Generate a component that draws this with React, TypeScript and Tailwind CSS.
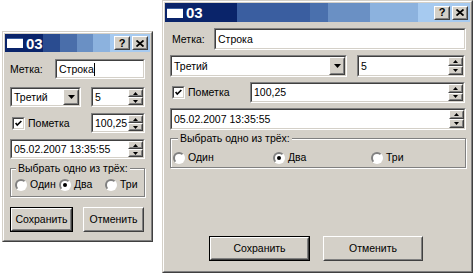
import type { ReactNode } from 'react';

/** Classic Win9x 3D borders. */
function Sunken({ className = '', children }: { className?: string; children?: ReactNode }) {
  return (
    <div className={`border border-t-[#808080] border-l-[#808080] border-r-white border-b-white ${className}`}>
      <div className="flex h-full items-center border border-t-[#404040] border-l-[#404040] border-r-[#d4d0c8] border-b-[#d4d0c8] bg-white">
        {children}
      </div>
    </div>
  );
}

function Raised({ className = '', children }: { className?: string; children?: ReactNode }) {
  return (
    <div className={`border border-t-white border-l-white border-r-[#404040] border-b-[#404040] bg-[#d4d0c8] ${className}`}>
      <div className="flex h-full items-center justify-center border border-t-[#d4d0c8] border-l-[#d4d0c8] border-r-[#808080] border-b-[#808080]">
        {children}
      </div>
    </div>
  );
}

function Arrow({ up = false, size = 'sm' }: { up?: boolean; size?: 'sm' | 'md' }) {
  const w = size === 'md' ? 7 : 5;
  const h = size === 'md' ? 4 : 3;
  const d = up ? `M${w / 2} 0L${w} ${h}L0 ${h}Z` : `M0 0L${w} 0L${w / 2} ${h}Z`;
  return (
    <svg width={w} height={h} viewBox={`0 0 ${w} ${h}`}>
      <path d={d} fill="#000" />
    </svg>
  );
}

function SpinButtons() {
  return (
    <div className="ml-auto flex h-full w-[15px] flex-col">
      <Raised className="flex-1">
        <Arrow up />
      </Raised>
      <Raised className="flex-1">
        <Arrow />
      </Raised>
    </div>
  );
}

function TextField({ value, className = '', cursor = false }: { value: string; className?: string; cursor?: boolean }) {
  return (
    <Sunken className={className}>
      <span className="pl-[2px]">{value}</span>
      {cursor && <span className="h-[13px] w-px bg-black" />}
    </Sunken>
  );
}

function Spinner({ value, className = '' }: { value: string; className?: string }) {
  return (
    <Sunken className={className}>
      <span className="pl-[2px]">{value}</span>
      <SpinButtons />
    </Sunken>
  );
}

function Combo({ value, className = '' }: { value: string; className?: string }) {
  return (
    <Sunken className={className}>
      <span className="pl-[2px]">{value}</span>
      <Raised className="ml-auto h-full w-[16px]">
        <Arrow size="md" />
      </Raised>
    </Sunken>
  );
}

function Checkbox({ label, className = '' }: { label: string; className?: string }) {
  return (
    <div className={`flex items-center gap-[3px] ${className}`}>
      <Sunken className="h-[13px] w-[13px]">
        <svg width="11" height="11" viewBox="0 0 11 11">
          <path d="M2 5L4 7.5L9 2.5" stroke="#000" strokeWidth="2" fill="none" />
        </svg>
      </Sunken>
      <span>{label}</span>
    </div>
  );
}

function Radio({ label, checked = false, className = '' }: { label: string; checked?: boolean; className?: string }) {
  return (
    <div className={`flex items-center gap-[3px] ${className}`}>
      <span className="flex h-[12px] w-[12px] items-center justify-center rounded-full border-2 border-t-[#808080] border-l-[#808080] border-r-white border-b-white bg-white">
        {checked && <span className="h-[4px] w-[4px] rounded-full bg-black" />}
      </span>
      <span>{label}</span>
    </div>
  );
}

function GroupBox({ label, className = '', labelClass = '', children }: { label: string; className?: string; labelClass?: string; children: ReactNode }) {
  return (
    <div className={`relative border border-[#808080] shadow-[inset_1px_1px_0_white,1px_1px_0_white] ${className}`}>
      <span className={`absolute -top-[8px] bg-[#d4d0c8] px-[2px] leading-[14px] ${labelClass}`}>{label}</span>
      {children}
    </div>
  );
}

function PushButton({ label, className = '', isDefault = false }: { label: string; className?: string; isDefault?: boolean }) {
  const btn = (
    <Raised className={isDefault ? 'h-full w-full' : className}>
      <span>{label}</span>
    </Raised>
  );
  return isDefault ? <div className={`border border-black ${className}`}>{btn}</div> : btn;
}

function TitleButton({ children }: { children: ReactNode }) {
  return <Raised className="h-[14px] w-[16px]">{children}</Raised>;
}

function TitleBar({ gradient, height }: { gradient: string; height: string }) {
  return (
    <div className={`flex items-center ${gradient} ${height}`}>
      <span className="ml-[2px] h-[10px] w-[16px] border-t border-[#3a5ea0] bg-white" />
      <span className="ml-[3px] text-[15px] font-bold leading-none text-white">03</span>
      <div className="ml-auto mr-[2px] flex gap-[2px]">
        <TitleButton>
          <span className="text-[11px] font-bold leading-none">?</span>
        </TitleButton>
        <TitleButton>
          <svg width="8" height="7" viewBox="0 0 8 7">
            <path d="M0.5 0.5L7.5 6.5M7.5 0.5L0.5 6.5" stroke="#000" strokeWidth="1.8" />
          </svg>
        </TitleButton>
      </div>
    </div>
  );
}

function Window({ className, children }: { className: string; children: ReactNode }) {
  return (
    <div className={`absolute flex flex-col border border-t-[#d4d0c8] border-l-[#d4d0c8] border-r-[#404040] border-b-[#404040] bg-[#d4d0c8] ${className}`}>
      <div className="flex flex-1 flex-col border border-t-white border-l-white border-r-[#808080] border-b-[#808080] p-px">
        {children}
      </div>
    </div>
  );
}

function SmallDialog() {
  return (
    <Window className="left-[2px] top-[31px] h-[211px] w-[151px]">
      <TitleBar
        height="h-[18px]"
        gradient="bg-[linear-gradient(90deg,#0a246a_0_38px,#2a4c90_38px_55px,#4a6eaa_55px_72px,#6a90c4_72px_88px,#8cb2de_88px_105px,#a6caf0_105px)]"
      />
      <div className="flex flex-col px-[5px] pt-[7px]">
        <div className="flex h-[20px] items-center">
          <span className="w-[45px]">Метка:</span>
          <TextField value="Строка" cursor className="h-full flex-1" />
        </div>
        <div className="mt-[8px] flex h-[20px] gap-[10px]">
          <Combo value="Третий" className="w-[71px]" />
          <Spinner value="5" className="flex-1" />
        </div>
        <div className="mt-[6px] flex h-[20px] items-center">
          <Checkbox label="Пометка" className="w-[81px] pl-[2px]" />
          <Spinner value="100,25" className="h-full flex-1" />
        </div>
        <Spinner value="05.02.2007 13:35:55" className="mt-[6px] h-[20px]" />
        <GroupBox label="Выбрать одно из трёх:" labelClass="left-[5px]" className="mt-[9px] h-[29px]">
          <div className="flex h-full items-center pl-[4px] pt-[4px]">
            <Radio label="Один" className="w-[44px]" />
            <Radio label="Два" checked className="w-[46px]" />
            <Radio label="Три" />
          </div>
        </GroupBox>
        <div className="mt-[10px] flex h-[25px] gap-[10px]">
          <PushButton label="Сохранить" isDefault className="w-[63px]" />
          <PushButton label="Отменить" className="w-[61px]" />
        </div>
      </div>
    </Window>
  );
}

function WideDialog() {
  return (
    <Window className="left-[162px] top-0 h-[273px] w-[311px]">
      <TitleBar
        height="h-[19px]"
        gradient="bg-[linear-gradient(90deg,#0a246a_0_72px,#3a5ea0_72px_145px,#4a70ad_145px_163px,#6a90c4_163px_205px,#8cb2de_205px_253px,#a6caf0_253px)]"
      />
      <div className="flex flex-1 flex-col pb-[9px] pl-[5px] pr-[4px] pt-[6px]">
        <div className="flex h-[22px] items-center">
          <span className="w-[44px] pl-[2px]">Метка:</span>
          <TextField value="Строка" className="h-full flex-1" />
        </div>
        <div className="mt-[5px] flex h-[22px] gap-[10px]">
          <Combo value="Третий" className="w-[177px]" />
          <Spinner value="5" className="mr-px flex-1" />
        </div>
        <div className="mt-[5px] flex h-[21px] items-center">
          <Checkbox label="Пометка" className="w-[80px] pl-[2px]" />
          <Spinner value="100,25" className="mr-px h-full flex-1" />
        </div>
        <Spinner value="05.02.2007 13:35:55" className="mt-[5px] h-[22px]" />
        <GroupBox label="Выбрать одно из трёх:" labelClass="left-[7px]" className="mt-[8px] h-[30px]">
          <div className="flex h-full items-center pl-[2px] pt-[9px]">
            <Radio label="Один" className="w-[100px]" />
            <Radio label="Два" checked className="w-[98px]" />
            <Radio label="Три" />
          </div>
        </GroupBox>
        <div className="mt-auto flex h-[25px] gap-[13px] pl-[39px]">
          <PushButton label="Сохранить" isDefault className="w-[101px]" />
          <PushButton label="Отменить" className="w-[100px]" />
        </div>
      </div>
    </Window>
  );
}

export default function App() {
  return (
    <div className="relative h-[273px] w-[473px] overflow-hidden bg-white font-['Liberation_Sans',Arial,sans-serif] text-[10.5px] leading-none text-black">
      <SmallDialog />
      <WideDialog />
    </div>
  );
}
